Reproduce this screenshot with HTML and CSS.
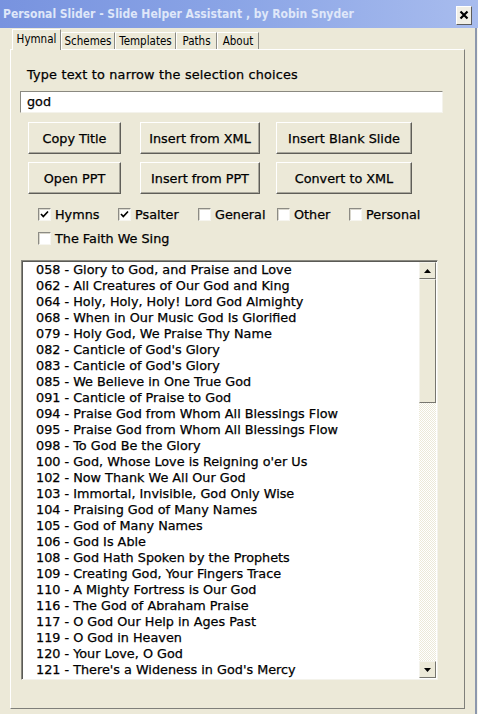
FILE: index.html
```html
<!DOCTYPE html>
<html>
<head>
<meta charset="utf-8">
<title>Personal Slider</title>
<link rel="stylesheet" href="styles.css">
</head>
<body>
<div class="window">
  <div class="titlebar">
    <span class="title">Personal Slider - Slide Helper Assistant , by Robin Snyder</span>
    <span class="close"><svg width="10" height="10" viewBox="0 0 10 10"><path d="M1.5 1.5 L8.5 8.5 M8.5 1.5 L1.5 8.5" stroke="#000" stroke-width="2.2"/></svg></span>
  </div>
  <div class="client">
    <div class="tabs">
      <div class="tab active t-hymnal">Hymnal</div>
      <div class="tab t-schemes">Schemes</div>
      <div class="tab t-templates">Templates</div>
      <div class="tab t-paths">Paths</div>
      <div class="tab t-about">About</div>
    </div>
    <div class="panel">
      <div class="label">Type text to narrow the selection choices</div>
      <div class="input">god</div>
      <div class="buttons">
        <div class="btn w1">Copy Title</div>
        <div class="btn w2">Insert from XML</div>
        <div class="btn w3">Insert Blank Slide</div>
        <div class="btn w1">Open PPT</div>
        <div class="btn w2">Insert from PPT</div>
        <div class="btn w3">Convert to XML</div>
      </div>
      <div class="checks">
        <label class="chk"><span class="box on"><svg width="9" height="9" viewBox="0 0 9 9"><path d="M1 4 L3.3 6.5 L8 1.5" fill="none" stroke="#000" stroke-width="1.7"/></svg></span>Hymns</label>
        <label class="chk"><span class="box on"><svg width="9" height="9" viewBox="0 0 9 9"><path d="M1 4 L3.3 6.5 L8 1.5" fill="none" stroke="#000" stroke-width="1.7"/></svg></span>Psalter</label>
        <label class="chk"><span class="box"></span>General</label>
        <label class="chk"><span class="box"></span>Other</label>
        <label class="chk"><span class="box"></span>Personal</label>
        <label class="chk wide"><span class="box"></span>The Faith We Sing</label>
      </div>
      <div class="listbox">
        <div class="items">
          <div>058 - Glory to God, and Praise and Love</div>
          <div>062 - All Creatures of Our God and King</div>
          <div>064 - Holy, Holy, Holy! Lord God Almighty</div>
          <div>068 - When in Our Music God Is Glorified</div>
          <div>079 - Holy God, We Praise Thy Name</div>
          <div>082 - Canticle of God's Glory</div>
          <div>083 - Canticle of God's Glory</div>
          <div>085 - We Believe in One True God</div>
          <div>091 - Canticle of Praise to God</div>
          <div>094 - Praise God from Whom All Blessings Flow</div>
          <div>095 - Praise God from Whom All Blessings Flow</div>
          <div>098 - To God Be the Glory</div>
          <div>100 - God, Whose Love is Reigning o'er Us</div>
          <div>102 - Now Thank We All Our God</div>
          <div>103 - Immortal, Invisible, God Only Wise</div>
          <div>104 - Praising God of Many Names</div>
          <div>105 - God of Many Names</div>
          <div>106 - God Is Able</div>
          <div>108 - God Hath Spoken by the Prophets</div>
          <div>109 - Creating God, Your Fingers Trace</div>
          <div>110 - A Mighty Fortress is Our God</div>
          <div>116 - The God of Abraham Praise</div>
          <div>117 - O God Our Help in Ages Past</div>
          <div>119 - O God in Heaven</div>
          <div>120 - Your Love, O God</div>
          <div>121 - There's a Wideness in God's Mercy</div>
        </div>
        <div class="scrollbar">
          <div class="sbtn"><svg width="7" height="4" viewBox="0 0 7 4"><path d="M0 4 L3.5 0 L7 4 Z" fill="#000"/></svg></div>
          <div class="thumb"></div>
          <div class="track"></div>
          <div class="sbtn"><svg width="7" height="4" viewBox="0 0 7 4"><path d="M0 0 L7 0 L3.5 4 Z" fill="#000"/></svg></div>
        </div>
      </div>
    </div>
  </div>
</div>
</body>
</html>
```

FILE: styles.css
```css
* { box-sizing: border-box; }
html, body { margin: 0; padding: 0; }
body {
  width: 478px;
  height: 714px;
  overflow: hidden;
  background: #ECE9D8;
  font-family: "DejaVu Sans", sans-serif;
  color: #000;
}
.window {
  width: 478px;
  height: 714px;
  background: #ECE9D8;
  box-shadow: inset -1px 0 #f6f5ee, inset -3px 0 #8c97ad;
}
.titlebar {
  height: 28px;
  display: flex;
  align-items: center;
  justify-content: space-between;
  padding: 0 6px 0 3px;
  background: linear-gradient(to right, #7893df 0%, #8ba5e6 50%, #a8bcee 100%);
}
.title {
  font-family: "DejaVu Sans Condensed", "DejaVu Sans", sans-serif;
  font-weight: bold;
  font-size: 12px;
  color: #dfe7f9;
  white-space: nowrap;
}
.close {
  width: 16px;
  height: 19px;
  margin-top: 2px;
  display: flex;
  align-items: center;
  justify-content: center;
  background: #f1efe6;
  border: 1px solid;
  border-color: #ffffff #5c5c5c #5c5c5c #ffffff;
}
.client {
  padding: 1px 13px 0 10px;
}
.tabs {
  display: flex;
  align-items: flex-end;
  height: 20px;
  padding-left: 2px;
  font-family: "DejaVu Sans Condensed", "DejaVu Sans", sans-serif;
  font-size: 11.5px;
}
.tab {
  height: 17px;
  display: flex;
  align-items: center;
  justify-content: center;
  border-top: 1px solid #ffffff;
  border-left: 1px solid #ffffff;
  border-right: 1px solid #8a8a84;
  background: #ECE9D8;
  white-space: nowrap;
}
.tab.active {
  height: 21px;
  margin-bottom: -1px;
  position: relative;
  z-index: 1;
  padding-bottom: 2px;
}
.t-hymnal { width: 49px; }
.t-schemes { width: 54px; }
.t-templates { width: 61px; }
.t-paths { width: 41px; }
.t-about { width: 42px; }
.panel {
  width: 455px;
  height: 660px;
  border: 1px solid;
  border-color: #ffffff #7f7f7a #7f7f7a #ffffff;
  padding: 0 0 0 9px;
  font-size: 12.8px;
  -webkit-text-stroke: 0.25px #000;
}
.label {
  height: 16px;
  line-height: 16px;
  margin: 17px 0 0 7px;
  letter-spacing: 0.2px;
}
.input {
  width: 423px;
  height: 22px;
  margin-top: 8px;
  background: #fff;
  border: 1px solid;
  border-color: #8a8980 #f4f3ec #f4f3ec #8a8980;
  padding-left: 6px;
  line-height: 20px;
}
.buttons {
  display: grid;
  grid-template-columns: 112px 136px 136px;
  row-gap: 8px;
  margin: 9px 0 0 8px;
}
.btn {
  height: 32px;
  display: flex;
  align-items: center;
  justify-content: center;
  border: 1px solid;
  border-color: #ffffff #5f5e58 #5f5e58 #ffffff;
  box-shadow: inset -1px -1px #a9a79c;
  background: #ECE9D8;
  white-space: nowrap;
}
.w1 { width: 93px; }
.w2 { width: 120px; }
.w3 { width: 136px; }
.checks {
  display: grid;
  grid-template-columns: 80px 80px 79px 72px 100px;
  row-gap: 8px;
  margin: 12px 0 0 18px;
}
.chk {
  display: flex;
  align-items: center;
  height: 16px;
  white-space: nowrap;
}
.chk.wide { grid-column: 1 / span 3; }
.box {
  width: 13px;
  height: 13px;
  margin-right: 4px;
  flex: none;
  background: #fff;
  border: 1px solid;
  border-color: #8c8b84 #f6f5ef #f6f5ef #8c8b84;
  box-shadow: inset 1px 1px #d8d6cc;
  display: flex;
  align-items: center;
  justify-content: center;
}
.listbox {
  display: flex;
  width: 417px;
  height: 420px;
  margin: 14px 0 0 1px;
  background: #fff;
  border: 1px solid;
  border-color: #8a8980 #f4f3ec #f4f3ec #8a8980;
  box-shadow: inset 1px 1px #5a5a55;
  padding: 1px;
}
.items {
  flex: 1;
  padding: 0 0 0 13px;
  line-height: 16px;
  overflow: hidden;
  white-space: nowrap;
}
.scrollbar {
  width: 17px;
  display: flex;
  flex-direction: column;
  flex: none;
}
.sbtn {
  height: 17px;
  display: flex;
  align-items: center;
  justify-content: center;
  background: #ECE9D8;
  border: 1px solid;
  border-color: #f4f3ec #77766f #77766f #f4f3ec;
}
.thumb {
  height: 124px;
  background: #ECE9D8;
  border: 1px solid;
  border-color: #f4f3ec #77766f #77766f #f4f3ec;
}
.track {
  flex: 1;
  background: repeating-conic-gradient(#ffffff 0 25%, #ECE9D8 0 50%) 0 0 / 2px 2px;
}
```
